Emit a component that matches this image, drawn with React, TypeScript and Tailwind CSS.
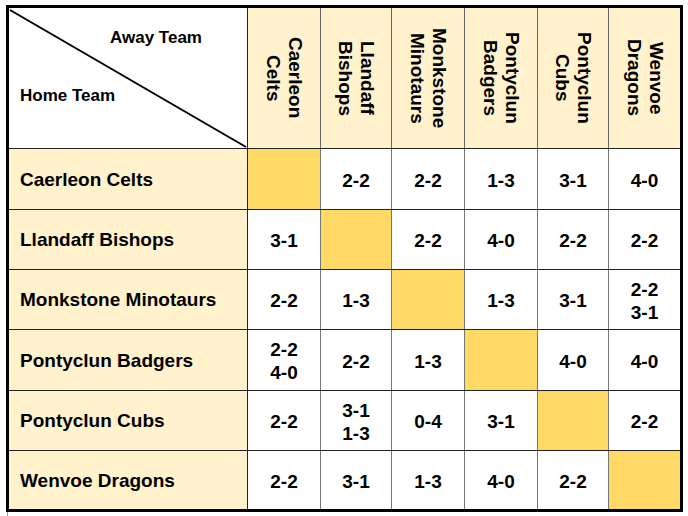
const awayTeams: string[][] = [
  ["Caerleon", "Celts"],
  ["Llandaff", "Bishops"],
  ["Monkstone", "Minotaurs"],
  ["Pontyclun", "Badgers"],
  ["Pontyclun", "Cubs"],
  ["Wenvoe", "Dragons"],
];

type Score = string | string[] | null;

const rows: { team: string; scores: Score[] }[] = [
  { team: "Caerleon Celts", scores: [null, "2-2", "2-2", "1-3", "3-1", "4-0"] },
  { team: "Llandaff Bishops", scores: ["3-1", null, "2-2", "4-0", "2-2", "2-2"] },
  { team: "Monkstone Minotaurs", scores: ["2-2", "1-3", null, "1-3", "3-1", ["2-2", "3-1"]] },
  { team: "Pontyclun Badgers", scores: [["2-2", "4-0"], "2-2", "1-3", null, "4-0", "4-0"] },
  { team: "Pontyclun Cubs", scores: ["2-2", ["3-1", "1-3"], "0-4", "3-1", null, "2-2"] },
  { team: "Wenvoe Dragons", scores: ["2-2", "3-1", "1-3", "4-0", "2-2", null] },
];

// widths of the six away columns (incl. their right border)
const colW = ["w-[73px]", "w-[71px]", "w-[73px]", "w-[73px]", "w-[71px]", "w-[71px]"];
// row heights (incl. bottom border)
const rowH = ["h-[61px]", "h-[60px]", "h-[60px]", "h-[61px]", "h-[60px]", "h-[58px]"];

export default function App() {
  return (
    <div className="min-h-screen bg-white pl-[6px] pt-[5px] font-['Liberation_Sans',Arial,sans-serif] text-black">
      <div className="w-[677px] border-[3px] border-black">
        {/* header row */}
        <div className="flex h-[141px] border-b border-[#222]">
          <div className="relative w-[239px] shrink-0 border-r border-[#222] bg-white">
            <svg className="absolute inset-0" width="238" height="140" viewBox="0 0 238 140">
              <line x1="1" y1="2" x2="237" y2="139" stroke="#000" strokeWidth="2" />
            </svg>
            <div className="relative flex flex-col text-[17px] font-bold leading-[20px]">
              <span className="pl-[101px] pt-[20px]">Away Team</span>
              <span className="mt-[38px] pl-[11px]">Home Team</span>
            </div>
          </div>
          {awayTeams.map((lines, i) => (
            <div
              key={i}
              className={`${colW[i]} flex shrink-0 items-center justify-center bg-[#FFF2CC] ${i < 5 ? "border-r border-[#666]" : ""}`}
            >
              <div className="text-center text-[19px] font-bold leading-[22px] [writing-mode:vertical-rl]">
                {lines[0]}
                <br />
                {lines[1]}
              </div>
            </div>
          ))}
        </div>

        {/* result rows */}
        {rows.map((row, r) => (
          <div key={row.team} className={`flex ${rowH[r]} ${r < 5 ? "border-b border-[#222]" : ""}`}>
            <div className="flex w-[239px] shrink-0 items-center border-r border-[#222] bg-[#FFF2CC] pl-[11px] pt-[2px] text-[19px] font-bold">
              {row.team}
            </div>
            {row.scores.map((s, c) => (
              <div
                key={c}
                className={`${colW[c]} flex shrink-0 flex-col items-center justify-center pt-[2px] text-[19px] font-bold leading-[23px] ${
                  s === null ? "bg-[#FFD966]" : "bg-white"
                } ${c < 5 ? "border-r border-[#777]" : ""}`}
              >
                {Array.isArray(s) ? s.map((v, k) => <span key={k}>{v}</span>) : s}
              </div>
            ))}
          </div>
        ))}
      </div>
      <div className="ml-[1px] h-[5px] w-px bg-[#999]" />
    </div>
  );
}
